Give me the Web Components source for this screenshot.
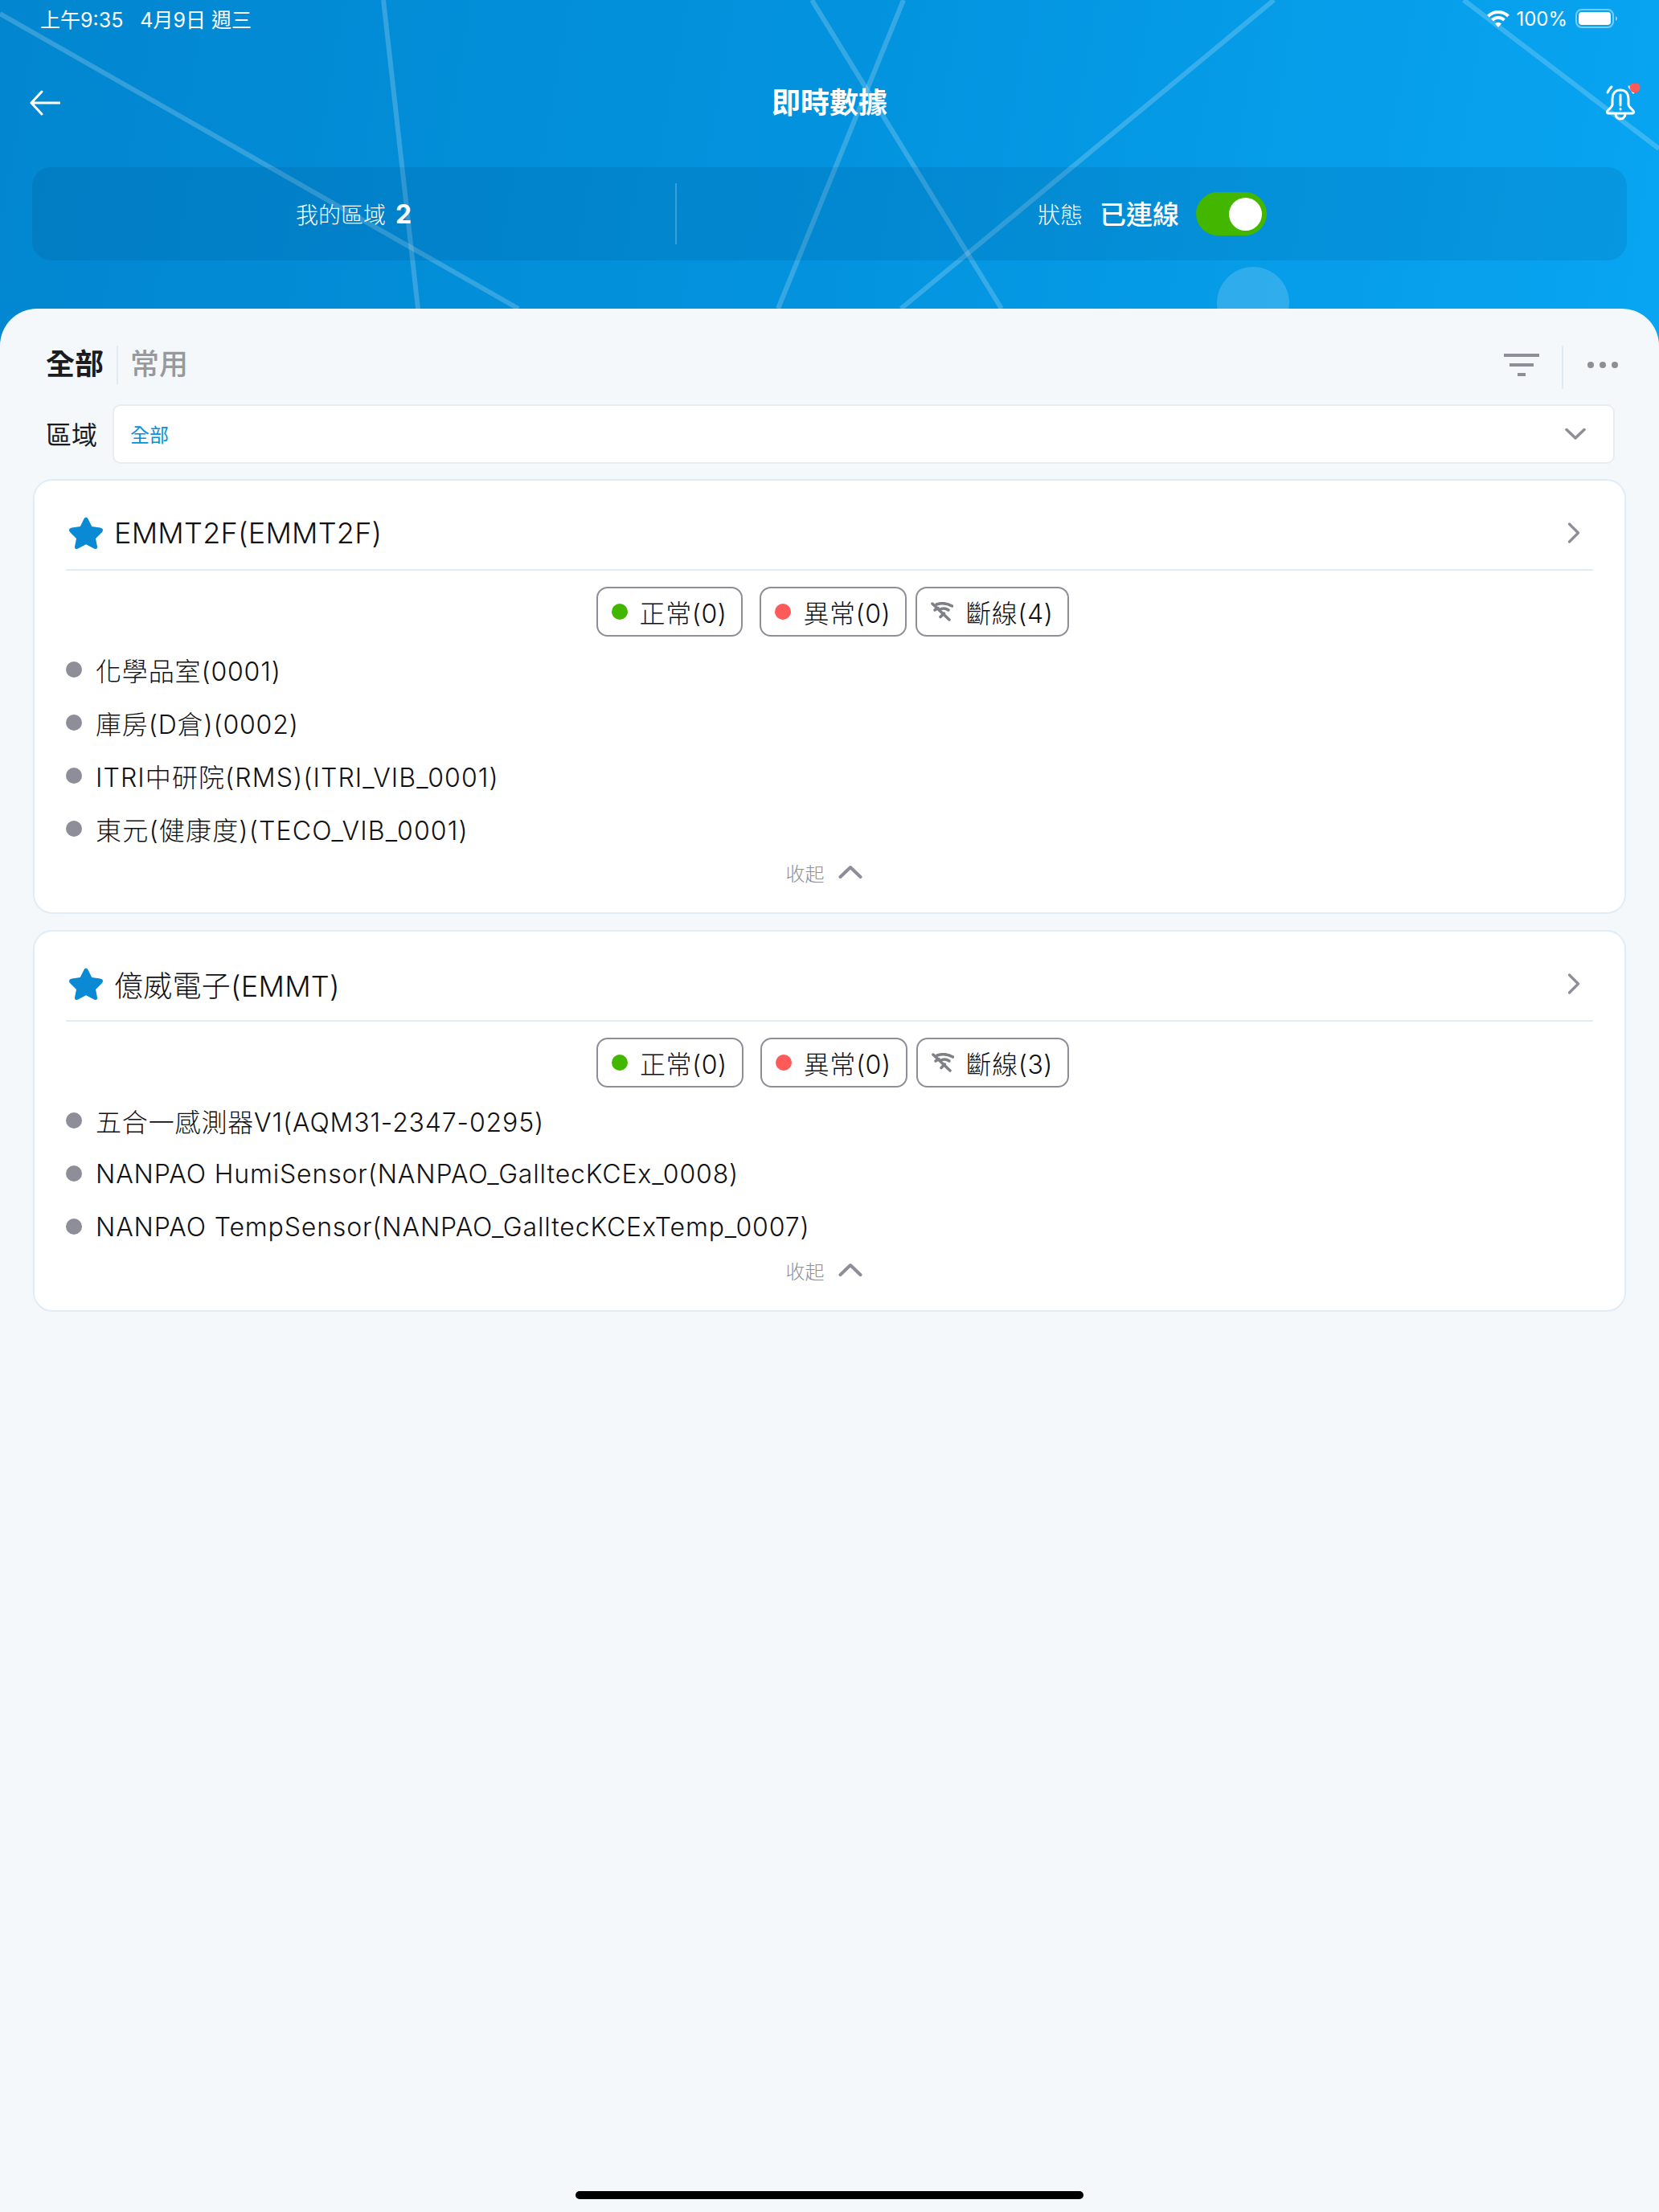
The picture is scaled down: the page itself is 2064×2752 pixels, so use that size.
<!DOCTYPE html>
<html lang="zh-Hant">
<head>
<meta charset="utf-8">
<title>即時數據</title>
<style>
  html, body { margin: 0; padding: 0; background: #f4f8fb; }
  body {
    width: 2064px; height: 2752px; overflow: hidden;
    font-family: "Inter", "Noto Sans CJK TC", sans-serif;
    color: #1c1c1e;
  }
  app-screen { width: 2064px; height: 2752px; }
</style>
</head>
<body>
<app-screen>
  <hero-header slot="top" title-text="即時數據" areas="2" state="已連線"></hero-header>
  <tab-row></tab-row>
  <area-select value="全部"></area-select>
  <area-card name="EMMT2F(EMMT2F)" normal="0" bad="0" off="4">
    <sensor-row>化學品室(0001)</sensor-row>
    <sensor-row>庫房(D倉)(0002)</sensor-row>
    <sensor-row style="letter-spacing:1.1px">ITRI中研院(RMS)(ITRI_VIB_0001)</sensor-row>
    <sensor-row style="letter-spacing:1.2px">東元(健康度)(TECO_VIB_0001)</sensor-row>
  </area-card>
  <area-card name="億威電子(EMMT)" normal="0" bad="0" off="3">
    <sensor-row>五合一感測器V1(AQM31-2347-0295)</sensor-row>
    <sensor-row>NANPAO HumiSensor(NANPAO_GalltecKCEx_0008)</sensor-row>
    <sensor-row>NANPAO TempSensor(NANPAO_GalltecKCExTemp_0007)</sensor-row>
  </area-card>
</app-screen>

<script>
class AppScreen extends HTMLElement {
  constructor() {
    super();
    this.attachShadow({mode: 'open'});
    this.shadowRoot.innerHTML = `
      <style>
        :host { display: flex; flex-direction: column; position: relative; background: #f4f8fb; }
        .panel { flex: 1; display: flex; flex-direction: column; padding: 0 40px; }
        .home {
          position: absolute; left: 716px; top: 2726px;
          width: 632px; height: 10px; border-radius: 5px; background: #000;
        }
      </style>
      <slot name="top"></slot>
      <div class="panel"><slot></slot></div>
      <div class="home"></div>
    `;
  }
}

class HeroHeader extends HTMLElement {
  constructor() {
    super();
    this.attachShadow({mode: 'open'});
  }
  connectedCallback() {
    const title = this.getAttribute('title-text');
    const areas = this.getAttribute('areas');
    const state = this.getAttribute('state');
    this.shadowRoot.innerHTML = `
      <style>
        :host {
          display: block; position: relative; height: 430px; overflow: hidden;
          background: linear-gradient(100deg, #0286d0 0%, #0393de 50%, #08a5f2 100%);
          color: #fff;
        }
        svg.bg { position: absolute; left: 0; top: 0; }
        .panel-top {
          position: absolute; left: 0; right: 0; top: 384px; height: 60px;
          background: #f4f8fb; border-radius: 46px 46px 0 0;
        }
        .status {
          position: relative; height: 46px; padding: 0 52px 0 50px;
          display: flex; justify-content: space-between; align-items: center;
          font-size: 25px; font-weight: 400;
        }
        .status .left { display: flex; gap: 21px; }
        .status .right { display: flex; align-items: center; font-size: 24px; }
        .status .pct { margin: 0 10px 0 8px; }
        .nav {
          position: relative; height: 162px; padding: 2px 37px 0 37px; box-sizing: border-box;
          display: grid; grid-template-columns: 1fr auto 1fr; align-items: center;
        }
        .nav h1 { margin: 0; font-size: 36px; font-weight: 600; line-height: 48px; }
        .bell { justify-self: end; width: 46px; height: 48px; margin-right: -15px; }
        .stats {
          position: relative; margin: 0 40px; height: 116px; border-radius: 24px;
          background: rgba(0, 40, 90, .1);
          display: grid; grid-template-columns: 802px 1fr; align-items: center;
        }
        .mine { display: flex; justify-content: center; align-items: center; gap: 12px;
          font-size: 28px; font-weight: 300; height: 76px;
          border-right: 2px solid rgba(255,255,255,.22); }
        .mine b { font-size: 32px; font-weight: 700; }
        .conn { display: flex; align-items: center; padding-left: 449px; }
        .conn .k { font-size: 28px; font-weight: 300; }
        .conn .v { font-size: 33px; font-weight: 500; margin: -2px 21px 0 21px; }
        .toggle {
          width: 88px; height: 54px; border-radius: 27px; background: #43b700;
          display: flex; align-items: center; justify-content: flex-end; padding-right: 6px;
          box-sizing: border-box;
        }
        .toggle i { display: block; width: 41px; height: 41px; border-radius: 50%; background: #fff; }
      </style>
      <svg class="bg" width="2064" height="430" viewBox="0 0 2064 430" fill="none">
        <g stroke="#fff" stroke-opacity=".2" stroke-width="6">
          <path d="M0 17 L645 384"/>
          <path d="M477 0 L520 384"/>
          <path d="M1010 0 L1246 384"/>
          <path d="M1124 0 L968 384"/>
          <path d="M1585 0 L1121 384"/>
          <path d="M1821 0 L2064 185"/>
        </g>
        <circle cx="1559" cy="377" r="45" fill="#fff" fill-opacity=".17"/>
      </svg>
      <div class="status">
        <div class="left"><span>上午9:35</span><span>4月9日 週三</span></div>
        <div class="right">
          <svg width="28" height="22" viewBox="0 0 28 22" fill="none" stroke="#fff" stroke-width="4">
            <path d="M1.500 8 A18 18 0 0 1 26.500 8"/>
            <path d="M6.500 13 A11 11 0 0 1 21.500 13"/>
            <path d="M10 17.500 L14 22 L18 17.500 A5.500 5.500 0 0 0 10 17.500Z" fill="#fff" stroke="none"/>
          </svg>
          <span class="pct">100%</span>
          <svg width="52" height="24" viewBox="0 0 52 24">
            <rect x="1" y="1" width="46" height="22" rx="7" fill="none" stroke="#fff" stroke-opacity=".45" stroke-width="2"/>
            <rect x="4" y="4" width="40" height="16" rx="4" fill="#fff"/>
            <path d="M50 9 L53 12 L50 15Z" fill="#fff" fill-opacity=".55"/>
          </svg>
        </div>
      </div>
      <div class="nav">
        <svg width="38" height="32" viewBox="0 0 38 32" fill="none" stroke="#fff" stroke-width="3" stroke-linecap="round" stroke-linejoin="round">
          <path d="M37 16 H2 M15 2 L2 16 L15 30"/>
        </svg>
        <h1>${title}</h1>
        <svg class="bell" viewBox="0 0 46 48" fill="none" stroke="#fff" stroke-width="3" stroke-linecap="round" stroke-linejoin="round">
          <path d="M20 8 C13 8 10 13 10 19 V26 C10 30 4 32 3.500 35 Q3 37 5.500 37 H34.500 Q37 37 36.500 35 C36 32 30 30 30 26 V19 C30 13 27 8 20 8Z"/>
          <path d="M14 38 A6 6 0 0 0 26 38"/>
          <path d="M20 14 V27 M20 31.500 V32"/>
          <path d="M4 11 Q5.500 7 9 4 M31 4 Q34.500 7 36 11"/>
          <circle cx="38" cy="5" r="6.500" fill="#ff5a5a" stroke="none"/>
        </svg>
      </div>
      <div class="stats">
        <div class="mine"><span>我的區域</span><b>${areas}</b></div>
        <div class="conn"><span class="k">狀態</span><span class="v">${state}</span>
          <div class="toggle"><i></i></div>
        </div>
      </div>
      <div class="panel-top"></div>
    `;
  }
}

class TabRow extends HTMLElement {
  constructor() {
    super();
    this.attachShadow({mode: 'open'});
    this.shadowRoot.innerHTML = `
      <style>
        :host { display: flex; align-items: center; height: 70px; margin-top: -11px; padding-left: 17px; }
        .on { font-size: 36px; font-weight: 700; line-height: 50px; color: #1c1c1e; margin-bottom: 2px; }
        .off { font-size: 36px; font-weight: 500; line-height: 50px; color: #98989f; margin: 0 0 2px 16px; padding-left: 15px; border-left: 2px solid #dfeaf4; }
        .tools { margin-left: auto; display: flex; align-items: center; }
        .sep { width: 2px; height: 60px; background: #dfeaf4; margin: 0 30px 0 28px; }
        .filter { display: flex; flex-direction: column; align-items: center; gap: 8px; width: 44px; }
        .filter i { display: block; height: 4px; background: #8e8e98; }
        .dots { display: flex; gap: 7px; margin-right: 11px; }
        .dots i { display: block; width: 8px; height: 8px; border-radius: 50%; background: #8e8e98; }
      </style>
      <span class="on">全部</span><span class="off">常用</span>
      <div class="tools">
        <div class="filter"><i style="width:44px"></i><i style="width:30px"></i><i style="width:10px"></i></div>
        <div class="sep"></div>
        <div class="dots"><i></i><i></i><i></i></div>
      </div>
    `;
  }
}

class AreaSelect extends HTMLElement {
  constructor() {
    super();
    this.attachShadow({mode: 'open'});
  }
  connectedCallback() {
    this.shadowRoot.innerHTML = `
      <style>
        :host { display: flex; align-items: center; margin: 14px 0 -1px; padding-left: 17px; padding-right: 15px; }
        label { font-size: 32px; width: 83px; flex: none; color: #1c1c1e; margin-top: -2px; }
        .box {
          flex: 1; height: 74px; box-sizing: border-box; background: #fff;
          border: 2px solid #e9ecf0; border-radius: 10px;
          display: flex; align-items: center; justify-content: space-between;
          padding: 0 34px 0 20px;
        }
        span { font-size: 24px; color: #0a8fd8; margin-top: -2px; }
      </style>
      <label>區域</label>
      <div class="box">
        <span>${this.getAttribute('value')}</span>
        <svg width="26" height="16" viewBox="0 0 26 16" fill="none" stroke="#8e8e98" stroke-width="3.500" stroke-linecap="round" stroke-linejoin="round">
          <path d="M2 2.500 L13 13 L24 2.500"/>
        </svg>
      </div>
    `;
  }
}

class StateChip extends HTMLElement {
  constructor() {
    super();
    this.attachShadow({mode: 'open'});
    this.shadowRoot.innerHTML = `
      <style>
        :host {
          display: inline-flex; align-items: center; box-sizing: border-box; height: 62px;
          padding: 0 18px 0 17px; background: #fff; letter-spacing: .55px;
          border: 2px solid #8e8e98; border-radius: 14px; font-size: 32px; font-weight: 300; color: #111114;
        }
        .mark { min-width: 20px; display: flex; justify-content: center; margin-right: 15px; }
        .dot { width: 20px; height: 20px; border-radius: 50%; }
      </style>
      <div class="mark"><slot name="icon"><div class="dot"></div></slot></div>
      <slot></slot>
    `;
  }
  connectedCallback() {
    const dot = this.shadowRoot.querySelector('.dot');
    dot.style.background = this.getAttribute('color') || '#43b700';
  }
}

class SensorRow extends HTMLElement {
  constructor() {
    super();
    this.attachShadow({mode: 'open'});
    this.shadowRoot.innerHTML = `
      <style>
        :host { display: flex; align-items: center; height: 66px; font-size: 32px; color: #111114; font-weight: 300; letter-spacing: .85px; }
        i { width: 20px; height: 20px; border-radius: 50%; background: #8e8e98; margin-right: 17px; flex: none; }
      </style>
      <i></i><slot></slot>
    `;
  }
}

class AreaCard extends HTMLElement {
  constructor() {
    super();
    this.attachShadow({mode: 'open'});
  }
  connectedCallback() {
    const name = this.getAttribute('name');
    this.shadowRoot.innerHTML = `
      <style>
        :host {
          display: block; box-sizing: border-box; margin: 20px 1px 0; background: #fff;
          border: 2px solid #e0ecf6; border-radius: 24px; padding: 0 39px 29px 39px;
        }
        .head {
          height: 112px; box-sizing: border-box; padding-top: 20px;
          display: flex; align-items: center; border-bottom: 2px solid #e0ecf6;
          font-size: 36px; font-weight: 300; color: #111114; letter-spacing: .25px;
        }
        .head svg.star { margin: 0 13px 0 3px; flex: none; }
        .head span { flex: 1; }
        .head svg.go { margin-right: 16px; }
        .chips { display: flex; justify-content: center; margin: 20px 0 8px; padding-left: 8px; }
        .chips state-chip:nth-child(2) { margin: 0 11px 0 21px; }
        .less {
          height: 42px; display: flex; justify-content: center; align-items: center; gap: 17px;
          font-size: 24px; font-weight: 300; color: #8e8e93; padding-right: 14px;
        }
      </style>
      <div class="head">
        <svg class="star" width="44" height="42" viewBox="0 0 44 42">
          <path d="M22 1.500 Q23.800 1.500 24.800 4 L29.200 13 L39.500 14.500 Q43 15 43 17.500 Q43 19 41.500 20.500 L34 28 L36 38 Q36.400 41 33.800 41 Q32.800 41 31.500 40.300 L22 35.300 L12.500 40.300 Q11.200 41 10.200 41 Q7.600 41 8 38 L10 28 L2.500 20.500 Q1 19 1 17.500 Q1 15 4.500 14.500 L14.800 13 L19.200 4 Q20.200 1.500 22 1.500Z" fill="#0a8ad4"/>
        </svg>
        <span>${name}</span>
        <svg class="go" width="16" height="26" viewBox="0 0 16 26" fill="none" stroke="#8e8e98" stroke-width="3.200" stroke-linecap="round" stroke-linejoin="round">
          <path d="M2.500 2 L13.500 13 L2.500 24"/>
        </svg>
      </div>
      <div class="chips">
        <state-chip color="#43b700">正常(${this.getAttribute('normal')})</state-chip>
        <state-chip color="#ff5a5a">異常(${this.getAttribute('bad')})</state-chip>
        <state-chip>
          <svg slot="icon" width="28" height="24" viewBox="0 0 28 24" fill="none" stroke="#7f7f88" stroke-width="3.500" stroke-linecap="round">
            <path d="M7 3 Q17 -0.500 26.500 5"/>
            <path d="M12 9 Q17 6.500 22 10"/>
            <path d="M2 2 L23 22"/>
            <path d="M5 10 L9 7.500 M12 18.500 L16.500 14"/>
          </svg>
          斷線(${this.getAttribute('off')})
        </state-chip>
      </div>
      <slot></slot>
      <div class="less">
        <span>收起</span>
        <svg width="30" height="18" viewBox="0 0 30 18" fill="none" stroke="#8e8e98" stroke-width="4" stroke-linecap="round" stroke-linejoin="round">
          <path d="M2.500 15 L15 3 L27.500 15"/>
        </svg>
      </div>
    `;
  }
}

customElements.define('app-screen', AppScreen);
customElements.define('hero-header', HeroHeader);
customElements.define('tab-row', TabRow);
customElements.define('area-select', AreaSelect);
customElements.define('state-chip', StateChip);
customElements.define('sensor-row', SensorRow);
customElements.define('area-card', AreaCard);
</script>
</body>
</html>
